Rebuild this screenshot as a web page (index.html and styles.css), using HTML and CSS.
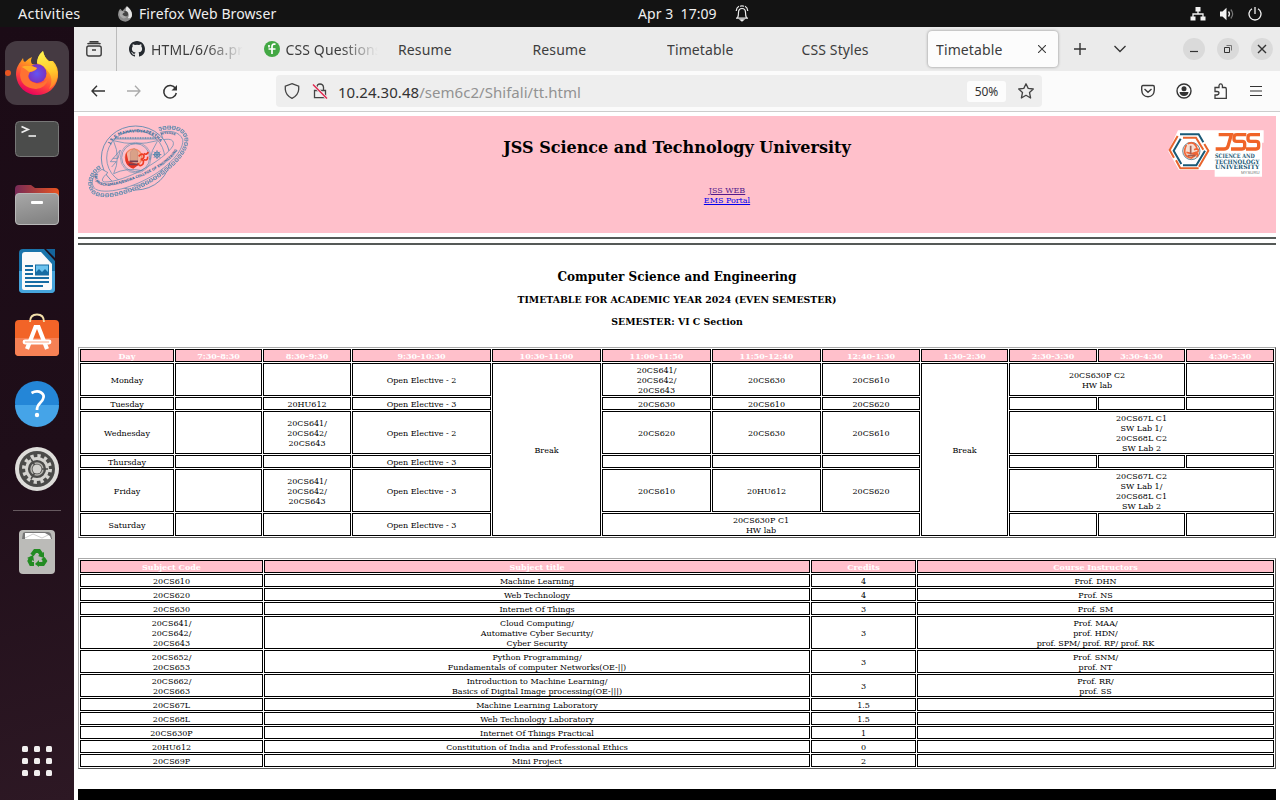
FILE: index.html
```html
<!DOCTYPE html>
<html lang="en">
<head>
<meta charset="utf-8">
<title>Timetable</title>
<link rel="stylesheet" href="styles.css">
</head>
<body>
<div class="desktop">
  <header class="topbar">
    <div class="topbar-left">
      <span class="activities">Activities</span>
      <svg class="mini-fox" width="16" height="16" viewBox="0 0 48 48"><path d="M3 27Q4 12 10 8L16 15Q24 7 29 1Q46 12 45 27Q42 45 25 47Q6 46 3 27Z" fill="#8c8c8c"/><path d="M27 15Q25 8 30 1Q49 17 44 32Q39 39 33 36Q40 20 27 15Z" fill="#e5e5e5"/><circle cx="24" cy="24" r="9" fill="#454545"/><path d="M7 16Q16 13 24 18Q19 20 16 25Q20 33 32 31Q20 44 9 30Z" fill="#aaa"/></svg>
      <span class="app-name">Firefox Web Browser</span>
    </div>
    <div class="clock"><span class="clock-text">Apr 3&nbsp; 17:09</span>
      <svg width="14" height="17" viewBox="0 0 14 17" fill="none" stroke="#eee" stroke-width="1.2"><path d="M1 13.200H13M2.500 13Q3.500 11 3.500 7.500Q3.500 3.500 7 3.500T10.500 7.500Q10.500 11 11.500 13M1.200 6Q1.500 2.500 4 1.300M12.800 6Q12.500 2.500 10 1.300M5 1.300Q7 .6 9 1.300"/><path d="M5.500 14.800H8.500L7 16Z" fill="#eee"/></svg>
    </div>
    <div class="status">
      <svg width="16" height="14" viewBox="0 0 16 14"><path d="M5.500 0H10.500V4.500H5.500ZM.5 9.500H5.500V13.500H.5ZM10.500 9.500H15.500V13.500H10.500Z" fill="#f2f2f2"/><path d="M8 4V7M3 10V7H13V10" fill="none" stroke="#f2f2f2" stroke-width="1.300"/></svg>
      <svg width="16" height="14" viewBox="0 0 16 14"><path d="M1 4.500H3.500L7.500 .7V13.300L3.500 9.500H1Z" fill="#f2f2f2"/><path d="M9.500 4.500Q11.500 7 9.500 9.500" fill="none" stroke="#eee" stroke-width="1.300"/><path d="M11.800 2.500Q15.500 7 11.800 11.500" fill="none" stroke="#777" stroke-width="1.200"/></svg>
      <svg width="14" height="14" viewBox="0 0 14 14" fill="none" stroke="#f2f2f2" stroke-width="1.300"><path d="M4 1.800A6 6 0 1 0 10 1.800M7 0V7"/></svg>
    </div>
  </header>
  <div class="workspace">
    <nav class="dock">
      <div class="slot"><i class="running"></i><div class="tile">
        <svg width="48" height="48" viewBox="0 0 48 48">
          <defs><linearGradient id="fx" x1=".8" y1="0" x2=".35" y2="1"><stop offset="0" stop-color="#fff23d"/><stop offset=".4" stop-color="#ff9c20"/><stop offset=".72" stop-color="#ff423e"/><stop offset="1" stop-color="#e7005e"/></linearGradient><linearGradient id="fy" x1=".5" y1="0" x2=".6" y2="1"><stop offset="0" stop-color="#fff44f"/><stop offset=".55" stop-color="#ffc92b"/><stop offset="1" stop-color="#ff7c2b"/></linearGradient><radialGradient id="fg"><stop offset="0" stop-color="#6354f2"/><stop offset="1" stop-color="#7b32bf"/></radialGradient></defs>
          <path d="M3 26C3 18 6 15 8 12L10 9Q10 12 12 13Q16 9 19 8Q17 12 19 15L24 16Q24 7 30 2Q31 8 36 12L40 12Q46 18 45 28C43 39 35 46 24 46S4 38 3 26Z" fill="url(#fx)"/>
          <path d="M24 14Q24 7 30 2Q31 8 36 13L38 12Q46 19 44 29Q42 37 36 40Q42 29 33 20Q30 16 24 14Z" fill="url(#fy)"/>
          <circle cx="24" cy="24.500" r="9.500" fill="url(#fg)"/>
          <path d="M8 19Q14 14 24 19Q23 22 17 23Q12 31 22 34Q29 36 35 30Q33 39 23 40Q8 39 7 26Z" fill="#ff7132"/><path d="M8 18Q16 15 24 19Q22 22 16 23Q10 18 8 18Z" fill="#ffac28"/>
        </svg></div></div>
      <div class="slot"><svg width="48" height="48" viewBox="0 0 48 48"><rect x="2.500" y="6.500" width="43" height="35" rx="4" fill="#4b4c4b" stroke="#777"/><path d="M8.500 11.500L15 14.500L8.500 17.500" fill="none" stroke="#eee" stroke-width="1.800"/><path d="M15.500 21H23" stroke="#eee" stroke-width="1.600"/></svg></div>
      <div class="slot"><svg width="48" height="48" viewBox="0 0 48 48"><defs><linearGradient id="fo"><stop stop-color="#762a57"/><stop offset="1" stop-color="#e95420"/></linearGradient><linearGradient id="gr" y2="1" x2=".3"><stop stop-color="#a8a8a8"/><stop offset="1" stop-color="#858585"/></linearGradient></defs><path d="M2 18V8Q2 4 6 4H18L22 7H42Q46 7 46 11V18Z" fill="url(#fo)"/><rect x="2.500" y="12.500" width="43" height="31" rx="3.500" fill="url(#gr)" stroke="#b8b8b8"/><rect x="18" y="20" width="12" height="3" rx="1" fill="#fff"/></svg></div>
      <div class="slot"><svg width="48" height="48" viewBox="0 0 48 48"><path d="M10 2H31L42 14V42Q42 46 38 46H10Q6 46 6 42V6Q6 2 10 2Z" fill="#1a74aa"/><path d="M6 24H42V42Q42 46 38 46H10Q6 46 6 42Z" fill="#46a5dc"/><path d="M12 5H28L39 17V41Q39 43 37 43H11Q9 43 9 41V8Q9 5 12 5Z" fill="#fafafa"/><path d="M33 2H42V11Z" fill="#14649b"/><path d="M12 19H20M12 23H20M12 27H20M12 31H36M12 35H36M12 39H30" stroke="#166ca3" stroke-width="1.800"/><rect x="22.500" y="18" width="13" height="10" fill="#6cc3ef" stroke="#176da2"/><path d="M23 28V25L26 22L29 25L32 22L35 25V28Z" fill="#166ca3"/></svg></div>
      <div class="slot"><svg width="48" height="48" viewBox="0 0 48 48"><rect x="2" y="7" width="44" height="36" rx="4" fill="#f26428"/><path d="M2 25H46V39Q46 43 42 43H6Q2 43 2 39Z" fill="#f68155"/><path d="M17 9Q17 1.500 24 1.500T31 9" fill="none" stroke="#f2dfaa" stroke-width="1.800"/><path d="M14 36L22.500 14H25.500L34 36" fill="none" stroke="#fff" stroke-width="4.200"/><path d="M12 29H36" stroke="#fff" stroke-width="4.800" stroke-linecap="round"/><path d="M12 29H36" stroke="#f68155" stroke-width=".7"/></svg></div>
      <div class="slot"><svg class="help" width="48" height="48" viewBox="0 0 48 48"><circle cx="24" cy="24" r="22" fill="#2486d7"/><path d="M2 26A22 22 0 0 0 46 26Z" fill="#45a4e8"/><path d="M18.500 14Q24 11 28 13.500T30 20C29 24 24 24 24 31" fill="none" stroke="#fff" stroke-width="2.700"/><circle cx="24" cy="36" r="2.200" fill="#fff"/></svg></div>
      <div class="slot"><svg width="48" height="48" viewBox="0 0 48 48"><circle cx="24" cy="24" r="22" fill="#deddda"/><circle cx="24" cy="24" r="18" fill="#4b4b49"/><circle cx="24" cy="24" r="13" fill="none" stroke="#d5d4d0" stroke-width="4" stroke-dasharray="3.200 3.607"/><circle cx="24" cy="24" r="10.500" fill="none" stroke="#d5d4d0" stroke-width="2.800"/><circle cx="24" cy="24" r="6" fill="none" stroke="#b5b4af" stroke-width="1.500"/><path d="M24 24H35M24 24L18 14M24 24L18 34" stroke="#4b4b49" stroke-width="1.500"/><circle cx="24" cy="24" r="4.500" fill="#d5d4d0"/></svg></div>
      <div class="dock-line"></div>
      <div class="slot"><svg width="48" height="48" viewBox="0 0 48 48"><rect x="6" y="2" width="36" height="44" rx="4" fill="#bbbbb8"/><path d="M9 11L10 5Q11 4 13 4H35Q37 4 38 6L39 11Z" fill="#777"/><path d="M12 11V5L32 5L37 8L38 11Z" fill="#fff"/><path d="M12 10L20 6L29 10L35 7" stroke="#ccc" fill="none"/><g fill="none" stroke="#228b22" stroke-width="4"><path d="M19 27L22 23H26L28.500 26.500"/><path d="M30 30L32 33L30 36H25"/><path d="M21 36H18L16.500 33L18 30"/></g><path d="M31 24V30L25 28ZM26 32V39L22 36ZM14 30L20 27L21 33Z" fill="#228b22"/></svg></div>
      <div class="apps-grid"><i></i><i></i><i></i><i></i><i></i><i></i><i></i><i></i><i></i></div>
    </nav>
    <main class="browser">
      <div class="tabstrip">
        <div class="recent"><svg width="16" height="16" viewBox="0 0 16 16" fill="none" stroke="#3c3c3c" stroke-width="1.400"><rect x=".8" y="5" width="14.400" height="10" rx="2"/><path d="M1.500 3.200Q2 2.500 3 2.500H13Q14 2.500 14.500 3.200M3.500 .7H12.500M6 9H10"/></svg></div>
        <div class="tabs">
          <div class="tab"><svg width="16" height="16" viewBox="0 0 16 16"><path fill="#24292f" d="M8 0C3.580 0 0 3.580 0 8c0 3.540 2.290 6.530 5.470 7.590.4.070.550-.170.550-.380v-1.490C3.780 14.200 3.310 12.770 3.310 12.770c-.36-.92-.89-1.170-.89-1.170-.72-.5.060-.49.060-.49.8.060 1.230.82 1.230.82.71 1.230 1.870.87 2.330.66.070-.51.280-.87.510-1.070-1.780-.2-3.640-.89-3.640-3.950 0-.87.310-1.590.82-2.150-.08-.2-.36-1.020.08-2.120 0 0 .67-.21 2.200.82a7.600 7.600 0 0 1 4 0c1.530-1.040 2.200-.82 2.200-.82.44 1.100.16 1.920.08 2.120.51.560.82 1.270.82 2.150 0 3.070-1.870 3.750-3.650 3.950.29.250.54.730.54 1.480v2.200c0 .210.150.460.550.380A8 8 0 0 0 16 8c0-4.420-3.580-8-8-8Z"/></svg><span class="tab-text faded">HTML/6/6a.pr</span></div>
          <div class="tab"><svg width="16" height="16" viewBox="0 0 16 16"><circle cx="8" cy="8" r="8" fill="#43a844"/><path d="M4.500 8H11.500M8 13V5.500Q8 3.200 10 3.200H11.500M5 4V6.500" stroke="#fff" stroke-width="1.700" fill="none"/></svg><span class="tab-text faded">CSS Questions</span></div>
          <div class="tab"><span class="tab-text">Resume</span></div>
          <div class="tab"><span class="tab-text">Resume</span></div>
          <div class="tab"><span class="tab-text">Timetable</span></div>
          <div class="tab"><span class="tab-text">CSS Styles</span></div>
          <div class="tab active"><span class="tab-text">Timetable</span><svg width="8" height="8" viewBox="0 0 8 8" stroke="#3c3c3c" stroke-width="1.100"><path d="M0 0L8 8M8 0L0 8"/></svg></div>
        </div>
        <div class="tab-actions">
          <svg width="12" height="12" viewBox="0 0 12 12" stroke="#333" stroke-width="1.400"><path d="M0 6H12M6 0V12"/></svg>
          <svg width="12" height="8" viewBox="0 0 12 8" fill="none" stroke="#333" stroke-width="1.300"><path d="M.5 1L6 6.500L11.500 1"/></svg>
        </div>
        <div class="window-actions">
          <span><svg width="22" height="22" viewBox="0 0 22 22"><path d="M7 13.500H15" stroke="#333" stroke-width="1.200"/></svg></span>
          <span><svg width="22" height="22" viewBox="0 0 22 22" fill="none" stroke="#333"><path d="M7.500 9.500H12.500V14.500H7.500Z"/><path d="M9.500 7.500H14.500V12.500" stroke="#777"/></svg></span>
          <span><svg width="22" height="22" viewBox="0 0 22 22" stroke="#333" stroke-width="1.400"><path d="M7 7L15 15M15 7L7 15"/></svg></span>
        </div>
      </div>
      <div class="toolbar">
        <div class="nav-actions">
          <svg width="14" height="12" viewBox="0 0 14 12" fill="none" stroke="#333" stroke-width="1.400"><path d="M14 6H1M6 .7L1 6L6 11.300"/></svg>
          <svg width="14" height="12" viewBox="0 0 14 12" fill="none" stroke="#aaa" stroke-width="1.300"><path d="M0 6H13M8 .7L13 6L8 11.300"/></svg>
          <svg class="reload" width="16" height="16" viewBox="0 0 16 16" fill="none" stroke="#333" stroke-width="1.500"><path d="M13.500 4.500A6.300 6.300 0 1 0 14.300 9"/><path d="M15 1V6.500H9.500Z" fill="#333" stroke="none"/></svg>
        </div>
        <div class="urlbar">
          <svg width="16" height="16" viewBox="0 0 16 16" fill="none" stroke="#444" stroke-width="1.300"><path d="M8 .7L14.700 3.200V6.500Q14.200 12.500 8 15.300Q1.800 12.500 1.300 6.500V3.200Z"/></svg>
          <svg width="16" height="16" viewBox="0 0 16 16" fill="none" stroke="#444" stroke-width="1.300"><path d="M5 7V4Q5 1 8 1T11.500 4V7M2.500 7.500H13.500V14.700H2.500Z"/><path d="M1 1.500L15 15.500" stroke="#eee" stroke-width="3"/><path d="M1 1.500L15 15.500" stroke="#e22850" stroke-width="1.500"/></svg>
          <span class="url">10.24.30.48<span class="path">/sem6c2/Shifali/tt.html</span></span>
          <span class="zoom">50%</span>
          <svg width="16" height="16" viewBox="0 0 16 16" fill="none" stroke="#444" stroke-width="1.300" stroke-linejoin="round"><path d="M8 .8L10.200 5.400L15.300 6L11.500 9.500L12.600 15L8 12.300L3.400 15L4.500 9.500L.7 6L5.800 5.400Z"/></svg>
        </div>
        <div class="tool-actions">
          <svg width="14" height="14" viewBox="0 0 14 14" fill="none" stroke="#3c3c3c" stroke-width="1.400"><path d="M2 1.500H12Q13.300 1.500 13.300 3V6Q13 12.500 7 12.800Q1 12.500 .7 6V3Q.7 1.500 2 1.500ZM3.500 5L7 8.300L10.500 5"/></svg>
          <svg width="16" height="16" viewBox="0 0 16 16"><circle cx="8" cy="8" r="7" fill="none" stroke="#333" stroke-width="1.400"/><circle cx="8" cy="5.700" r="2.500" fill="#333"/><path d="M3.500 9H12.500Q12 13 8 13T3.500 9Z" fill="#333"/></svg>
          <svg width="16" height="16" viewBox="0 0 16 16" fill="none" stroke="#3c3c3c" stroke-width="1.300"><path d="M2 15.300V12H4Q6 11.500 6 10T4 8.500H2V4.500H6V2.500Q6.300 .8 7.700 .8T9.400 2.500V4.500H12Q13.300 4.500 13.300 6V15.300Z"/></svg>
          <svg width="12" height="12" viewBox="0 0 12 12" stroke="#333" stroke-width="1.200"><path d="M0 1.500H12M0 6H12M0 10.500H12"/></svg>
        </div>
      </div>
      <div class="page">
        <div class="banner">
          <svg class="crest" width="104" height="75" viewBox="30 39 312 225" fill="none" stroke="#5286ad">
            <defs>
              <path id="arcTop" d="M103 103Q120 68 179 67T256 103"/>
              <path id="ring" d="M57 190C50 224 80 232 110 226C190 210 288 164 311 108"/>
              <path id="ringTop" d="M256 76Q284 64 311 86"/>
              <path id="gear" d="M72 171C42 190 34 225 53 247C90 273 190 238 250 195C308 153 334 116 331 85C325 54 288 46 249 58"/>
            </defs>
            <ellipse cx="179" cy="144" rx="103" ry="96" stroke-width="2.500"/>
            <ellipse cx="179" cy="144" rx="87" ry="82" stroke-width="2"/>
            <path d="M78 178C47 197 41 222 59 238C100 257 192 224 244 188C300 149 324 111 320 88C310 65 283 60 254 67L262 89C285 85 296 91 291 107C267 149 145 218 84 216C73 212 83 198 96 188Z" fill="#ffc0cb" stroke-width="2"/>
            <use href="#gear" stroke-width="11" stroke-dasharray="10 4"/>
            <use href="#gear" stroke="#ffc0cb" stroke-width="7" stroke-dasharray="6 8" stroke-dashoffset="-2"/>
            <use href="#gear" stroke-width="1.500"/>
            <circle cx="179" cy="143" r="42" stroke-width="2"/><circle cx="179" cy="143" r="46" stroke-width="1.500"/>
            <path d="M112 92Q179 110 244 92M113 94Q135 143 113 191Q150 172 200 182M222 150Q226 120 244 94M113 87H244" stroke-width="2"/><path d="M117 84H240" stroke-width="4" stroke-dasharray="3 2"/>
            <path d="M133 120L103 155H121L107 171M133 120L126 145H110" stroke-width="2"/>
            <path d="M230 134L256 134M243 121V147M234 125L252 143M252 125L234 143" stroke-width="3"/><circle cx="243" cy="134" r="8" stroke-width="3"/>
            <circle cx="173" cy="142" r="25" stroke="#f18b65" stroke-width="4" fill="#f3b49f"/>
            <path d="M151 126Q139 166 172 176L188 164L157 153Z" fill="#e73425" stroke="none"/><path d="M174 115L163 126V155H185V125Z" fill="#d9a188" stroke="#9f6f69"/><path d="M161 154H186M158 163H188" stroke="#773e51" stroke-width="5"/>
            <path d="M188 139Q199 127 204 137Q205 147 194 148Q206 149 201 162Q191 173 185 159M203 149Q216 153 215 140M204 130Q211 137 217 126" stroke="#ed3b23" stroke-width="5"/>
            <g class="crest-text"><text font-size="12"><textPath href="#arcTop" textLength="172" lengthAdjust="spacingAndGlyphs">J.S.S MAHAVIDYAPEETHA</textPath></text><text font-size="11"><textPath href="#ring" textLength="305" lengthAdjust="spacingAndGlyphs">SRI JAYACHAMARAJENDRA COLLEGE OF ENGINEERING</textPath></text><text font-size="9"><textPath href="#ringTop">MYSORE</textPath></text></g>
          </svg>
          <div class="banner-mid">
            <h1>JSS Science and Technology University</h1>
            <p class="links"><a class="visited">JSS WEB</a><br><a>EMS Portal</a></p>
          </div>
          <svg class="badge" width="97" height="49" viewBox="54 57 291 147">
            <path d="M84 61H341V98H336V200H194V180H87L55 124Z" fill="#fff"/>
            <g fill="none" stroke-width="6"><path d="M90 73H146L160 97" stroke="#195976"/><path d="M99 83H138L160 119" stroke="#e8642c"/><path d="M83 78L59 120L72 143" stroke="#e8642c"/><path d="M92 86L71 122L94 162" stroke="#195976"/><path d="M78 151L91 175H146" stroke="#e8642c"/><path d="M99 166H139L165 122" stroke="#195976"/><path d="M163 102L175 122L147 170" stroke="#e8642c"/></g>
            <circle cx="124" cy="123" r="26" fill="#f6ded2" stroke="#245a71" stroke-width="2"/><path d="M109 105Q94 139 124 144L138 134L109 127M113 101Q138 92 141 120M132 119Q148 112 144 125L135 128Q150 131 140 141" fill="none" stroke="#ef6637" stroke-width="5"/><path d="M122 107V133M113 137H136" stroke="#a35e51" stroke-width="5"/>
            <g fill="none" stroke="#f06428" stroke-width="10"><path d="M206 74H244L234 109Q231 117 222 117H197"/><path d="M289 74H261Q252 74 252 82V88Q252 94 260 94H277Q284 94 284 101V109Q284 117 276 117H243"/><path d="M330 74H302Q294 74 294 82V88Q294 94 302 94H318Q326 94 326 101V109Q326 117 318 117H288"/></g>
            <g class="badge-text"><text x="195" y="143" textLength="119" lengthAdjust="spacingAndGlyphs">SCIENCE AND</text><text x="195" y="161" textLength="133" lengthAdjust="spacingAndGlyphs">TECHNOLOGY</text><text x="195" y="178" textLength="133" lengthAdjust="spacingAndGlyphs">UNIVERSITY</text><text class="city" x="273" y="193" textLength="56" lengthAdjust="spacingAndGlyphs">MYSURU</text></g>
          </svg>
        </div>
        <hr><hr class="second">
        <h2>Computer Science and Engineering</h2>
        <h3>TIMETABLE FOR ACADEMIC YEAR 2024 (EVEN SEMESTER)</h3>
        <h3 class="semester">SEMESTER: VI C Section</h3>
        <table class="schedule">
          <colgroup><col class="w94"><col class="w87"><col class="w88"><col class="w139"><col class="w109"><col class="w109"><col class="w109"><col class="w98"><col class="w87"><col class="w88"><col class="w87"><col class="w88"></colgroup>
          <tr><th>Day</th><th>7:30-8:30</th><th>8:30-9:30</th><th>9:30-10:30</th><th>10:30-11:00</th><th>11:00-11:50</th><th>11:50-12:40</th><th>12:40-1:30</th><th>1:30-2:30</th><th>2:30-3:30</th><th>3:30-4:30</th><th>4:30-5:30</th></tr>
          <tr class="h33"><td>Monday</td><td></td><td></td><td>Open Elective - 2</td><td rowspan="6">Break</td><td>20CS641/<br>20CS642/<br>20CS643</td><td>20CS630</td><td>20CS610</td><td rowspan="6">Break</td><td colspan="2">20CS630P C2<br>HW lab</td><td></td></tr>
          <tr><td>Tuesday</td><td></td><td>20HU612</td><td>Open Elective - 3</td><td>20CS630</td><td>20CS610</td><td>20CS620</td><td></td><td></td><td></td></tr>
          <tr class="h43"><td>Wednesday</td><td></td><td>20CS641/<br>20CS642/<br>20CS643</td><td>Open Elective - 2</td><td>20CS620</td><td>20CS630</td><td>20CS610</td><td colspan="3">20CS67L C1<br>SW Lab 1/<br>20CS68L C2<br>SW Lab 2</td></tr>
          <tr><td>Thursday</td><td></td><td></td><td>Open Elective - 3</td><td></td><td></td><td></td><td></td><td></td><td></td></tr>
          <tr class="h43"><td>Friday</td><td></td><td>20CS641/<br>20CS642/<br>20CS643</td><td>Open Elective - 3</td><td>20CS610</td><td>20HU612</td><td>20CS620</td><td colspan="3">20CS67L C2<br>SW Lab 1/<br>20CS68L C1<br>SW Lab 2</td></tr>
          <tr class="h23"><td>Saturday</td><td></td><td></td><td>Open Elective - 3</td><td colspan="3">20CS630P C1<br>HW lab</td><td></td><td></td><td></td></tr>
        </table>
        <table class="subjects">
          <colgroup><col class="w183"><col class="w546"><col class="w105"><col class="w357"></colgroup>
          <tr><th>Subject Code</th><th>Subject title</th><th>Credits</th><th>Course Instructors</th></tr>
          <tr><td>20CS610</td><td>Machine Learning</td><td>4</td><td>Prof. DHN</td></tr>
          <tr><td>20CS620</td><td>Web Technology</td><td>4</td><td>Prof. NS</td></tr>
          <tr><td>20CS630</td><td>Internet Of Things</td><td>3</td><td>Prof. SM</td></tr>
          <tr class="h33"><td>20CS641/<br>20CS642/<br>20CS643</td><td>Cloud Computing/<br>Automative Cyber Security/<br>Cyber Security</td><td>3</td><td>Prof. MAA/<br>prof. HDN/<br>prof. SPM/ prof. RP/ prof. RK</td></tr>
          <tr class="h23"><td>20CS652/<br>20CS653</td><td>Python Programming/<br>Fundamentals of computer Networks(OE-||)</td><td>3</td><td>Prof. SNM/<br>prof. NT</td></tr>
          <tr class="h23"><td>20CS662/<br>20CS663</td><td>Introduction to Machine Learning/<br>Basics of Digital Image processing(OE-|||)</td><td>3</td><td>Prof. RR/<br>prof. SS</td></tr>
          <tr><td>20CS67L</td><td>Machine Learning Laboratory</td><td>1.5</td><td></td></tr>
          <tr><td>20CS68L</td><td>Web Technology Laboratory</td><td>1.5</td><td></td></tr>
          <tr><td>20CS630P</td><td>Internet Of Things Practical</td><td>1</td><td></td></tr>
          <tr><td>20HU612</td><td>Constitution of India and Professional Ethics</td><td>0</td><td></td></tr>
          <tr><td>20CS69P</td><td>Mini Project</td><td>2</td><td></td></tr>
        </table>
        <div class="footer"></div>
      </div>
    </main>
  </div>
</div>
</body>
</html>
```
FILE: styles.css
```css
* { box-sizing: border-box; }
body { margin: 0; overflow: hidden; }
svg { display: block; flex: none; }
.desktop { width: 1280px; height: 800px; display: flex; flex-direction: column; overflow: hidden; font-family: "Noto Sans", sans-serif; }
.topbar { height: 27px; flex: none; background: #131313; color: #efefef; display: grid; grid-template-columns: 638px 1fr auto; align-items: center; font-size: 14px; line-height: 27px; }
.topbar-left { display: flex; align-items: center; padding-left: 18px; }
.activities { width: 99px; font-size: 14.5px; letter-spacing: 0.2px; }
.mini-fox { margin-right: 6px; }
.app-name { letter-spacing: 0.1px; }
.clock { display: flex; align-items: center; gap: 17px; white-space: nowrap; }
.clock-text { width: 80px; letter-spacing: 0.05px; }
.status { display: flex; align-items: center; gap: 13px; padding-right: 18px; }
.workspace { flex: 1; display: flex; min-height: 0; }

.dock { width: 74px; flex: none; padding-top: 13px; display: flex; flex-direction: column; align-items: center; background: linear-gradient(165deg, #1b0b16, #1f0e19 55%, #2d1824); }
.slot { position: relative; width: 74px; height: 66px; flex: none; display: flex; align-items: center; justify-content: center; }
.tile { width: 64px; height: 64px; border-radius: 12px; background: #453a42; display: flex; align-items: center; justify-content: center; }
.running { position: absolute; left: 5px; top: 30px; width: 6px; height: 6px; border-radius: 3px; background: #e95420; }
.help { margin-bottom: 1px; }
.dock-line { width: 48px; height: 1px; flex: none; margin: 8px 0; background: #66595f; }
.apps-grid { display: grid; grid-template-columns: repeat(3, 6px); gap: 6px; margin-top: auto; margin-bottom: 24px; }
.apps-grid i { width: 6px; height: 6px; border-radius: 1.5px; background: #f1efef; }

.browser { flex: 1; min-width: 0; background: #fff; display: flex; flex-direction: column; }
.tabstrip { height: 44px; flex: none; background: #ebebeb; display: flex; align-items: center; color: #3d3d3d; }
.recent { width: 43px; height: 44px; border-right: 1px solid #bbb; display: flex; align-items: center; padding-left: 12px; flex: none; }
.tabs { display: flex; padding-left: 4px; }
.tab { width: 134.5px; height: 36px; padding-left: 8px; display: flex; align-items: center; gap: 6px; }
.tab-text { font-size: 14px; line-height: 20px; padding-top: 1px; white-space: nowrap; overflow: hidden; letter-spacing: 0.12px; }
.faded { width: 92px; -webkit-mask-image: linear-gradient(90deg, #000 60%, transparent); mask-image: linear-gradient(90deg, #000 60%, transparent); }
.active { width: 130px; background: #fcfcfc; border-radius: 4px; box-shadow: 0 0 3px #888; justify-content: space-between; padding-right: 12px; }
.tab-actions { display: flex; align-items: center; gap: 28px; margin-left: 16px; }
.window-actions { display: flex; gap: 12px; margin-left: auto; padding-right: 7px; }
.window-actions span { width: 22px; height: 22px; border-radius: 50%; background: #dadada; }

.toolbar { height: 41px; flex: none; background: #fbfbfb; border-bottom: 1px solid #ccc; padding-left: 17px; display: flex; }
.nav-actions { width: 185px; display: flex; align-items: center; gap: 22px; }
.reload { margin-left: -1px; margin-top: 1px; }
.urlbar { width: 766px; height: 32px; margin-top: 4px; border-radius: 4px; background: #eee; display: flex; align-items: center; padding: 0 8px; }
.urlbar svg + svg { margin-left: 12px; }
.url { flex: 1; margin-left: 10px; padding-top: 1px; font-size: 15px; line-height: 20px; letter-spacing: 0.04px; color: #333; }
.path { color: #929292; }
.zoom { width: 39px; height: 21px; margin-right: 12px; border-radius: 3px; background: #fcfcfc; text-align: center; font-size: 12px; line-height: 21px; color: #333; }
.tool-actions { display: flex; align-items: center; gap: 21px; margin-left: auto; padding-right: 18px; }

.page { flex: 1; min-height: 0; padding: 4px 4px 0; font-family: "DejaVu Serif", serif; color: #000; text-align: center; overflow: hidden; }
.banner { height: 117px; background: pink; display: grid; grid-template-columns: 116px 1fr 116px; }
.crest { margin: 7px 0 0 8px; overflow: visible; }
.crest-text { fill: #376f9b; stroke: none; font-family: "DejaVu Sans", sans-serif; font-weight: bold; }
.badge { margin: 13px 0 0 8px; }
.badge-text { fill: #195976; font: bold 18px "DejaVu Serif", serif; }
.city { fill: #777; font: 12px "Liberation Sans", sans-serif; }
.banner-mid { padding-top: 22px; }
h1 { margin: 0; font-size: 16px; line-height: 20px; }
.links { margin: 28px 0 0 100px; font-size: 8px; line-height: 10px; }
.links a { color: #0000ee; text-decoration: underline; }
.links .visited { color: #551a8b; }
hr { height: 2px; margin: 4px 0 0; border: 0; background: #555957; }
h2 { margin: 24px 0 0; font-size: 12px; line-height: 16px; }
h3 { margin: 9px 0 0; font-size: 9.36px; line-height: 12px; }
.semester { margin-top: 10px; }
table { width: 1198px; table-layout: fixed; border: 1px solid; border-color: #aaa #555 #555 #aaa; border-spacing: 1px; font-size: 8px; line-height: 10px; }
.schedule { margin-top: 19px; }
.subjects { margin-top: 20px; }
th, td { height: 13px; border: 1px solid #000; padding: 1px 0 0; }
th { background: pink; color: #fff; }
td { padding-top: 2px; }
/* Text sits low in its row without making the row taller. */
td::after { content: ""; display: block; margin-bottom: -1px; }
.h33 td { height: 33px; }
.h43 td { height: 43px; }
.h23 td { height: 23px; }
.w87 { width: 87px; }
.w88 { width: 88px; }
.w94 { width: 94px; }
.w98 { width: 98px; }
.w105 { width: 105px; }
.w109 { width: 109px; }
.w139 { width: 139px; }
.w183 { width: 183px; }
.w357 { width: 357px; }
.w546 { width: 546px; }
.footer { height: 40px; margin-top: 20px; background: #000; }
```
